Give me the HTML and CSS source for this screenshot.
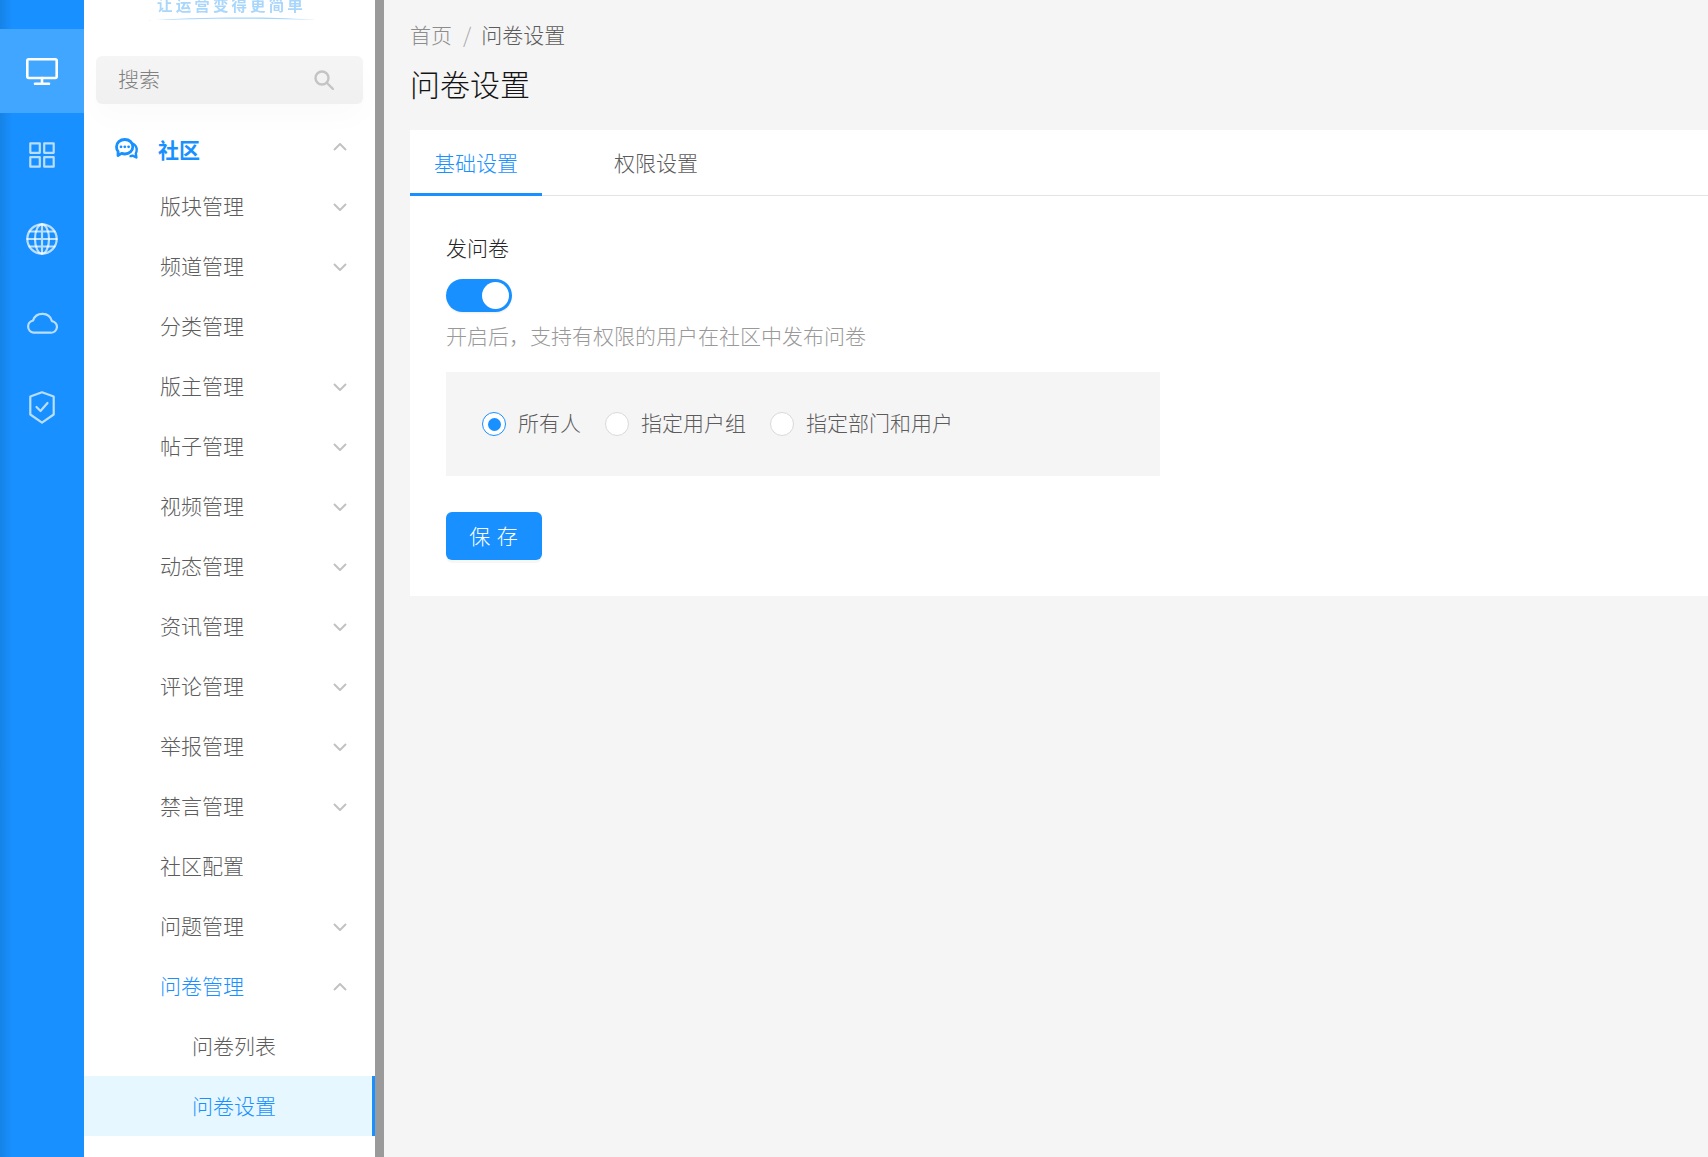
FILE: index.html
```html
<!DOCTYPE html>
<html lang="zh-CN">
<head>
<meta charset="utf-8">
<title>问卷设置</title>
<link rel="stylesheet" href="styles.css">
</head>
<body>
<div class="app">
  <nav class="rail">
    <a class="rail-item active"><svg class="ic" width="32" height="27" viewBox="0 0 32 27"><rect x="1.300" y="1.300" width="29.400" height="18.700" rx="1.500"/><path d="M16 20v5M9 25.700h14"/></svg></a>
    <a class="rail-item"><svg class="ic" width="26" height="26" viewBox="0 0 26 26"><rect x="1.300" y="1.300" width="9.500" height="9.500"/><rect x="15.200" y="1.300" width="9.500" height="9.500"/><rect x="1.300" y="15.200" width="9.500" height="9.500"/><rect x="15.200" y="15.200" width="9.500" height="9.500"/></svg></a>
    <a class="rail-item"><svg class="ic" width="32" height="32" viewBox="0 0 32 32"><circle cx="16" cy="16" r="14.700"/><ellipse cx="16" cy="16" rx="7" ry="14.700"/><path d="M16 1.300v29.400M1.300 16h29.400M3.500 8.500h25M3.500 23.500h25"/></svg></a>
    <a class="rail-item"><svg class="ic" width="32" height="22" viewBox="0 0 32 22"><path d="M7.500 20.700h17a5.800 5.800 0 0 0 1.500-11.500A10 10 0 0 0 7 8.500 6.200 6.200 0 0 0 7.500 20.700z"/></svg></a>
    <a class="rail-item"><svg class="ic" width="26" height="33" viewBox="0 0 26 33"><path d="M13 1.300l11.700 4.200v18L13 31.700 1.300 23.500v-18z"/><path d="M7.500 16l4 4 7-8"/></svg></a>
  </nav>

  <aside class="side">
    <div class="side-inner">
      <div class="logo">
        <span class="logo-text">让运营变得更简单</span>
        <svg class="logo-swoosh" width="170" height="5" viewBox="0 0 170 5"><path d="M0 4.500C50 1 120 0 170 4C120 2 50 2.500 0 4.500z"/></svg>
      </div>
      <div class="search">
        <span class="search-label">搜索</span>
        <svg class="search-ic" width="20" height="20" viewBox="0 0 20 20"><circle cx="8" cy="8" r="6.500"/><path d="M13 13l6 6"/></svg>
      </div>
      <ul class="menu">
        <li class="menu-head">
          <svg class="chat" width="23" height="21" viewBox="0 0 23 21"><path class="chat-back" d="M17.500 5.500c2.800 1.300 4.200 3.500 4.200 6.300 0 1.500-.4 2.800-.9 3.700l.6 4-3.800-1.800c-1 .4-2 .5-3.100.4"/><path class="chat-front" d="M9.800 1.500c4.800 0 8 3.200 8 7.200s-3.200 7.300-8 7.300c-1.200 0-2.300-.2-3.200-.6L3 17.500l.1-4C1.900 12.300 1.500 10.600 1.500 8.700c0-4 3.500-7.200 8.300-7.200z"/><circle class="chat-dot" cx="6" cy="8.800" r="1.400"/><circle class="chat-dot" cx="9.800" cy="8.800" r="1.400"/><circle class="chat-dot" cx="13.600" cy="8.800" r="1.400"/></svg>
          <span class="menu-head-label">社区</span>
          <svg class="chev" width="14" height="8" viewBox="0 0 14 8"><path d="M1 7l6-6 6 6"/></svg>
        </li>
        <li class="row">版块管理<svg class="chev" width="14" height="8" viewBox="0 0 14 8"><path d="M1 1l6 6 6-6"/></svg></li>
        <li class="row">频道管理<svg class="chev" width="14" height="8" viewBox="0 0 14 8"><path d="M1 1l6 6 6-6"/></svg></li>
        <li class="row">分类管理</li>
        <li class="row">版主管理<svg class="chev" width="14" height="8" viewBox="0 0 14 8"><path d="M1 1l6 6 6-6"/></svg></li>
        <li class="row">帖子管理<svg class="chev" width="14" height="8" viewBox="0 0 14 8"><path d="M1 1l6 6 6-6"/></svg></li>
        <li class="row">视频管理<svg class="chev" width="14" height="8" viewBox="0 0 14 8"><path d="M1 1l6 6 6-6"/></svg></li>
        <li class="row">动态管理<svg class="chev" width="14" height="8" viewBox="0 0 14 8"><path d="M1 1l6 6 6-6"/></svg></li>
        <li class="row">资讯管理<svg class="chev" width="14" height="8" viewBox="0 0 14 8"><path d="M1 1l6 6 6-6"/></svg></li>
        <li class="row">评论管理<svg class="chev" width="14" height="8" viewBox="0 0 14 8"><path d="M1 1l6 6 6-6"/></svg></li>
        <li class="row">举报管理<svg class="chev" width="14" height="8" viewBox="0 0 14 8"><path d="M1 1l6 6 6-6"/></svg></li>
        <li class="row">禁言管理<svg class="chev" width="14" height="8" viewBox="0 0 14 8"><path d="M1 1l6 6 6-6"/></svg></li>
        <li class="row">社区配置</li>
        <li class="row">问题管理<svg class="chev" width="14" height="8" viewBox="0 0 14 8"><path d="M1 1l6 6 6-6"/></svg></li>
        <li class="row open">问卷管理<svg class="chev" width="14" height="8" viewBox="0 0 14 8"><path d="M1 7l6-6 6 6"/></svg></li>
        <li class="row sub">问卷列表</li>
        <li class="row sub current">问卷设置</li>
      </ul>
    </div>
    <div class="scrollbar"></div>
  </aside>

  <main class="main">
    <div class="crumbs"><span>首页</span><span class="crumb-sep">/</span><span class="crumb-now">问卷设置</span></div>
    <h1 class="title">问卷设置</h1>
    <section class="card">
      <div class="tabs">
        <div class="tab active">基础设置</div>
        <div class="tab">权限设置</div>
      </div>
      <div class="form">
        <div class="label">发问卷</div>
        <div class="switch"><span class="knob"></span></div>
        <div class="hint">开启后，支持有权限的用户在社区中发布问卷</div>
        <div class="radio-box">
          <label class="radio"><span class="dot on"></span>所有人</label>
          <label class="radio"><span class="dot"></span>指定用户组</label>
          <label class="radio"><span class="dot"></span>指定部门和用户</label>
        </div>
        <button class="save">保 存</button>
      </div>
    </section>
  </main>
</div>
</body>
</html>
```

FILE: styles.css
```css
* { box-sizing: border-box; }
html, body { margin: 0; padding: 0; height: 100%; overflow: hidden; }
body {
  font-family: "Noto Sans CJK SC", "Liberation Sans", sans-serif;
  font-size: 21px;
  font-weight: 300;
  color: #5c5c5c;
  background: #f5f5f5;
}
ul { list-style: none; margin: 0; padding: 0; }

.app { display: flex; height: 100vh; }

/* rail */
.rail {
  flex: 0 0 84px;
  padding-top: 29px;
  background: linear-gradient(90deg, #1682e6 0, #1890ff 12px);
}
.rail-item {
  display: flex;
  align-items: center;
  justify-content: center;
  height: 84px;
  color: rgba(255, 255, 255, .7);
}
.rail-item.active { background: #40a6ff; color: #fff; }
.ic { fill: none; stroke: currentColor; stroke-width: 2.200; stroke-linejoin: round; stroke-linecap: round; }
.active .ic { stroke-width: 2.600; }

/* side */
.side { flex: 0 0 300px; display: flex; background: #fff; }
.side-inner { flex: 1; min-width: 0; overflow: hidden; }
.scrollbar { flex: 0 0 9px; background: #9a9a9a; }

.logo { height: 56px; overflow: hidden; display: flex; flex-direction: column; align-items: center; }
.logo-text {
  margin: -6px 0 0 4px;
  font-size: 15.500px;
  font-weight: 700;
  line-height: 20px;
  letter-spacing: 3.100px;
  color: #a9d6fb;
  white-space: nowrap;
  filter: blur(.5px);
}
.logo-swoosh { margin: 2px 0 0 2px; fill: #a9d6fb; }

.search {
  display: flex;
  align-items: center;
  justify-content: space-between;
  height: 48px;
  margin: 0 12px;
  padding: 0 29px 0 22px;
  border-radius: 6px;
  background: linear-gradient(180deg, #f5f5f5, #f0f0f0);
  box-shadow: 0 14px 28px rgba(0, 0, 0, .02);
  color: #808080;
}
.search-label { margin-top: -4px; }
.search-ic { fill: none; stroke: #c4c4c4; stroke-width: 2.400; stroke-linecap: round; }

.menu { padding-top: 12px; }
.menu-head {
  display: flex;
  align-items: center;
  height: 60px;
  padding: 8px 28px 0 31px;
  color: #1890ff;
}
.chat { flex: none; margin: -4px 20px 0 0; }
.chat-front { fill: #fff; stroke: #1890ff; stroke-width: 2.800; stroke-linejoin: round; }
.chat-back { fill: none; stroke: #1890ff; stroke-width: 2.400; stroke-linejoin: round; }
.chat-dot { fill: #1890ff; }
.menu-head-label { flex: 1; margin-top: -2px; font-weight: 700; }
.menu-head .chev { margin-top: -6px; }

.row {
  display: flex;
  align-items: center;
  justify-content: space-between;
  height: 60px;
  padding: 0 28px 2px 76px;
}
.chev { flex: none; fill: none; stroke: #c2c2c2; stroke-width: 2; margin-top: 3px; }
.row.open { color: #1890ff; }
.row.sub { padding-left: 108px; }
.row.current {
  color: #1890ff;
  background: #e6f7ff;
  border-right: 3px solid #1890ff;
}

/* main */
.main { flex: 1; min-width: 0; padding: 19px 0 0 26px; }
.crumbs { display: flex; height: 30px; line-height: 30px; color: #8c8c8c; }
.crumb-sep { margin: 0 10px 0 11px; color: #aaa; }
.crumb-now { color: #5c5c5c; }
.title {
  margin: 14px 0 0;
  height: 44px;
  font-size: 30px;
  line-height: 40px;
  font-weight: 300;
  color: #141414;
}
.card { margin-top: 23px; height: 466px; background: #fff; }
.tabs { display: flex; height: 66px; border-bottom: 1px solid #e4e4e4; }
.tab { width: 132px; margin-right: 48px; height: 66px; text-align: center; line-height: 65px; }
.tab.active { color: #1890ff; border-bottom: 3px solid #1890ff; }

.form { padding: 31px 36px 0; }
.label { height: 40px; line-height: 40px; color: #262626; }
.switch {
  display: flex;
  justify-content: flex-end;
  align-items: center;
  width: 66px;
  height: 33px;
  margin-top: 12px;
  padding-right: 3px;
  border-radius: 17px;
  background: #1890ff;
  box-shadow: 0 1px 2px rgba(0, 0, 0, .08);
}
.knob { width: 27px; height: 27px; border-radius: 50%; background: #fff; }
.hint { margin-top: 7px; height: 32px; line-height: 32px; color: #999; }
.radio-box {
  display: flex;
  align-items: center;
  gap: 24px;
  width: 714px;
  height: 104px;
  margin-top: 21px;
  padding-left: 36px;
  background: #f5f5f5;
}
.radio { display: flex; align-items: center; gap: 12px; line-height: 26px; padding-bottom: 4px; }
.dot {
  position: relative;
  width: 24px;
  height: 24px;
  margin-top: 4px;
  border: 1.500px solid #d9d9d9;
  border-radius: 50%;
  background: #fff;
}
.dot.on { border-color: #1890ff; }
.dot.on::after {
  content: "";
  position: absolute;
  inset: 4.500px;
  border-radius: 50%;
  background: #1890ff;
}
.save {
  display: block;
  width: 96px;
  height: 48px;
  margin-top: 36px;
  padding: 0 0 3px;
  border: 0;
  border-radius: 6px;
  font: inherit;
  letter-spacing: 1px;
  color: #fff;
  background: #1890ff;
  box-shadow: 0 3px 0 rgba(0, 0, 0, .03);
}
```
